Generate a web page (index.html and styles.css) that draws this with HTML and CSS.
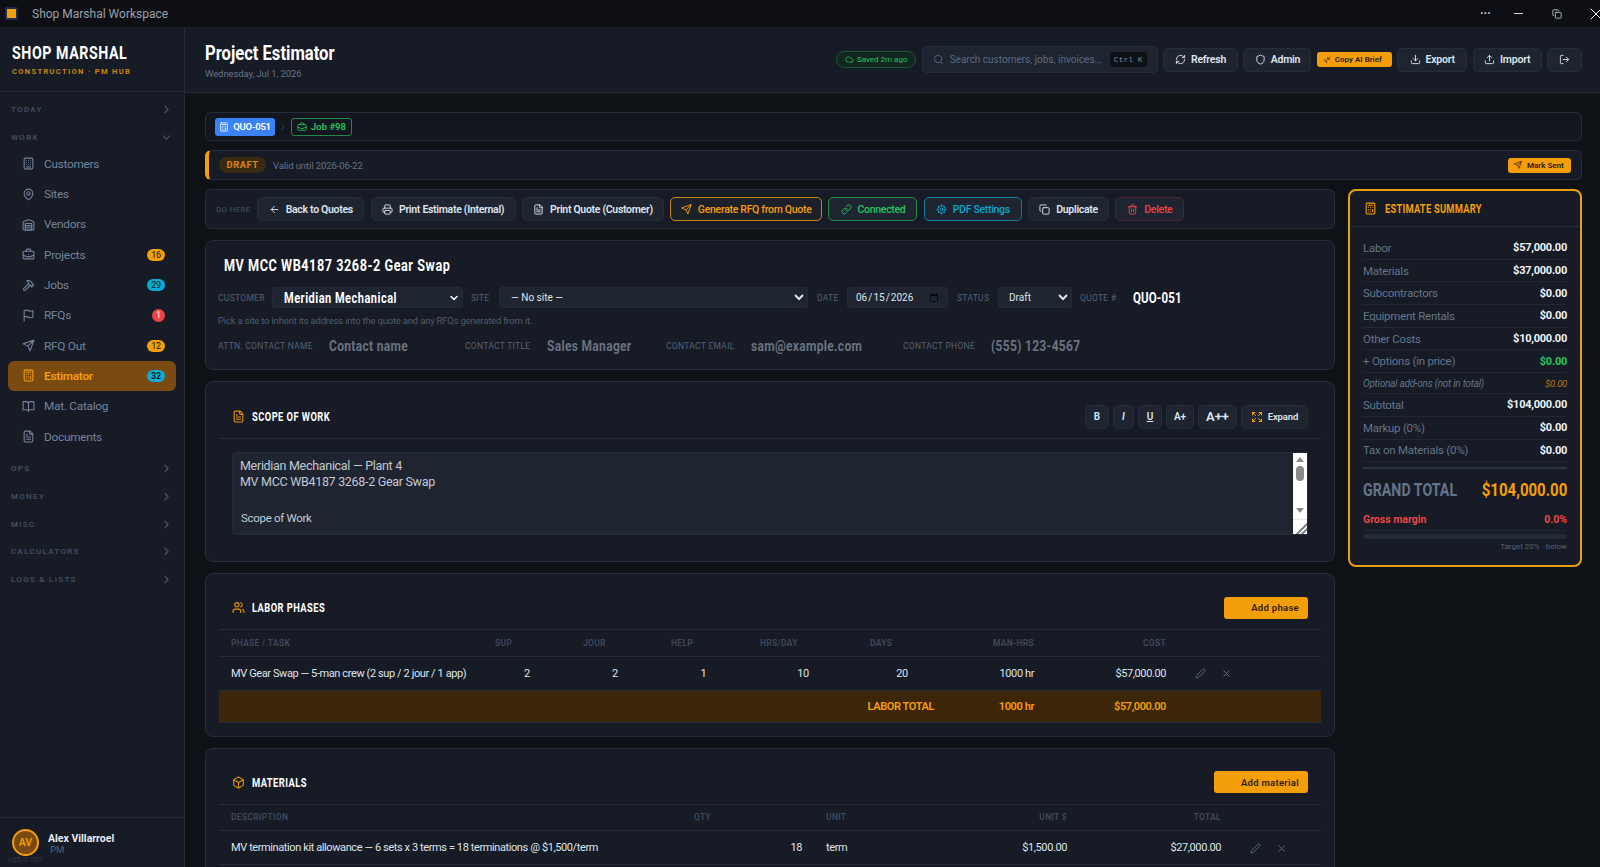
FILE: index.html
```html
<!DOCTYPE html>
<html lang="en">
<head>
    <meta charset="UTF-8">
    <title>Shop Marshal Workspace</title>
    <link rel="stylesheet" href="styles.css">
</head>
<body>
    <svg class="sprite" xmlns="http://www.w3.org/2000/svg">
        <symbol id="i-building" viewBox="0 0 24 24"><rect x="4" y="2" width="16" height="20" rx="2"/><path d="M9 22v-4h6v4M8 6h.01M16 6h.01M12 6h.01M12 10h.01M12 14h.01M16 10h.01M16 14h.01M8 10h.01M8 14h.01"/></symbol>
        <symbol id="i-pin" viewBox="0 0 24 24"><path d="M20 10c0 6-8 12-8 12s-8-6-8-12a8 8 0 0 1 16 0Z"/><circle cx="12" cy="10" r="3"/></symbol>
        <symbol id="i-warehouse" viewBox="0 0 24 24"><path d="M22 8.35V20a2 2 0 0 1-2 2H4a2 2 0 0 1-2-2V8.35A2 2 0 0 1 3.26 6.5l8-3.2a2 2 0 0 1 1.48 0l8 3.2A2 2 0 0 1 22 8.35Z"/><path d="M6 18h12M6 14h12"/><rect x="6" y="10" width="12" height="12"/></symbol>
        <symbol id="i-briefcase" viewBox="0 0 24 24"><path d="M12 12h.01M16 6V4a2 2 0 0 0-2-2h-4a2 2 0 0 0-2 2v2M22 13a18.15 18.15 0 0 1-20 0"/><rect x="2" y="6" width="20" height="14" rx="2"/></symbol>
        <symbol id="i-hammer" viewBox="0 0 24 24"><path d="m15 12-8.5 8.5c-.83.83-2.17.83-3 0a2.12 2.12 0 0 1 0-3L12 9M17.64 15 22 10.64M20.91 11.7l-1.25-1.25c-.6-.6-.93-1.4-.93-2.25v-.86L16.01 4.6a5.56 5.56 0 0 0-3.94-1.64H9l.92.82A6.18 6.18 0 0 1 12 8.4v1.56l2 2h2.47l2.26 1.91"/></symbol>
        <symbol id="i-flag" viewBox="0 0 24 24"><path d="M4 15s1-1 4-1 5 2 8 2 4-1 4-1V3s-1 1-4 1-5-2-8-2-4 1-4 1zM4 22v-7"/></symbol>
        <symbol id="i-send" viewBox="0 0 24 24"><path d="m22 2-7 20-4-9-9-4ZM22 2 11 13"/></symbol>
        <symbol id="i-calc" viewBox="0 0 24 24"><rect x="4" y="2" width="16" height="20" rx="2"/><path d="M8 6h8M16 14v4M16 10h.01M12 10h.01M8 10h.01M12 14h.01M8 14h.01M12 18h.01M8 18h.01"/></symbol>
        <symbol id="i-book" viewBox="0 0 24 24"><path d="M2 3h6a4 4 0 0 1 4 4v14a3 3 0 0 0-3-3H2zM22 3h-6a4 4 0 0 0-4 4v14a3 3 0 0 1 3-3h7z"/></symbol>
        <symbol id="i-file" viewBox="0 0 24 24"><path d="M15 2H6a2 2 0 0 0-2 2v16a2 2 0 0 0 2 2h12a2 2 0 0 0 2-2V7ZM14 2v4a2 2 0 0 0 2 2h4M10 9H8M16 13H8M16 17H8"/></symbol>
        <symbol id="i-right" viewBox="0 0 24 24"><path d="m9 18 6-6-6-6"/></symbol>
        <symbol id="i-down" viewBox="0 0 24 24"><path d="m6 9 6 6 6-6"/></symbol>
        <symbol id="i-cloud" viewBox="0 0 24 24"><path d="M17.5 19H9a7 7 0 1 1 6.71-9h1.79a4.5 4.5 0 1 1 0 9Z"/></symbol>
        <symbol id="i-search" viewBox="0 0 24 24"><circle cx="11" cy="11" r="8"/><path d="m21 21-4.3-4.3"/></symbol>
        <symbol id="i-refresh" viewBox="0 0 24 24"><path d="M3 12a9 9 0 0 1 9-9 9.75 9.75 0 0 1 6.74 2.74L21 8M21 3v5h-5M21 12a9 9 0 0 1-9 9 9.75 9.75 0 0 1-6.74-2.74L3 16M8 16H3v5"/></symbol>
        <symbol id="i-shield" viewBox="0 0 24 24"><path d="M20 13c0 5-3.5 7.5-7.66 8.95a1 1 0 0 1-.67-.01C7.5 20.5 4 18 4 13V6a1 1 0 0 1 1-1c2 0 4.5-1.2 6.24-2.72a1.17 1.17 0 0 1 1.52 0C14.51 3.81 17 5 19 5a1 1 0 0 1 1 1z"/></symbol>
        <symbol id="i-spark" viewBox="0 0 24 24"><path d="M14 4v6h6M14 10l7-7M4 12h4M6 17l3-3M11 16v4"/></symbol>
        <symbol id="i-download" viewBox="0 0 24 24"><path d="M21 15v4a2 2 0 0 1-2 2H5a2 2 0 0 1-2-2v-4M7 10l5 5 5-5M12 15V3"/></symbol>
        <symbol id="i-upload" viewBox="0 0 24 24"><path d="M21 15v4a2 2 0 0 1-2 2H5a2 2 0 0 1-2-2v-4M17 8l-5-5-5 5M12 3v12"/></symbol>
        <symbol id="i-logout" viewBox="0 0 24 24"><path d="M9 21H5a2 2 0 0 1-2-2V5a2 2 0 0 1 2-2h4M16 17l5-5-5-5M21 12H9"/></symbol>
        <symbol id="i-left" viewBox="0 0 24 24"><path d="m12 19-7-7 7-7M19 12H5"/></symbol>
        <symbol id="i-printer" viewBox="0 0 24 24"><path d="M6 18H4a2 2 0 0 1-2-2v-5a2 2 0 0 1 2-2h16a2 2 0 0 1 2 2v5a2 2 0 0 1-2 2h-2M6 9V3a1 1 0 0 1 1-1h10a1 1 0 0 1 1 1v6"/><rect x="6" y="14" width="12" height="8" rx="1"/></symbol>
        <symbol id="i-link" viewBox="0 0 24 24"><path d="M10 13a5 5 0 0 0 7.54.54l3-3a5 5 0 0 0-7.07-7.07l-1.72 1.71M14 11a5 5 0 0 0-7.54-.54l-3 3a5 5 0 0 0 7.07 7.07l1.71-1.71"/></symbol>
        <symbol id="i-gear" viewBox="0 0 24 24"><circle cx="12" cy="12" r="8"/><circle cx="12" cy="12" r="3"/><path d="M12 2v2M12 20v2M2 12h2M20 12h2M5 5l1.5 1.5M17.5 17.500 19 19M5 19l1.5-1.5M17.5 6.500 19 5"/></symbol>
        <symbol id="i-copy" viewBox="0 0 24 24"><rect x="8" y="8" width="14" height="14" rx="2"/><path d="M4 16c-1.100 0-2-.9-2-2V4c0-1.100.9-2 2-2h10c1.100 0 2 .9 2 2"/></symbol>
        <symbol id="i-trash" viewBox="0 0 24 24"><path d="M3 6h18M19 6v14c0 1-1 2-2 2H7c-1 0-2-1-2-2V6M8 6V4c0-1 1-2 2-2h4c1 0 2 1 2 2v2M10 11v6M14 11v6"/></symbol>
        <symbol id="i-users" viewBox="0 0 24 24"><path d="M16 21v-2a4 4 0 0 0-4-4H6a4 4 0 0 0-4 4v2"/><circle cx="9" cy="7" r="4"/><path d="M22 21v-2a4 4 0 0 0-3-3.870M16 3.130a4 4 0 0 1 0 7.750"/></symbol>
        <symbol id="i-box" viewBox="0 0 24 24"><path d="M21 8a2 2 0 0 0-1-1.730l-7-4a2 2 0 0 0-2 0l-7 4A2 2 0 0 0 3 8v8a2 2 0 0 0 1 1.730l7 4a2 2 0 0 0 2 0l7-4A2 2 0 0 0 21 16ZM3.300 7 12 12l8.700-5M12 22V12"/></symbol>
        <symbol id="i-pencil" viewBox="0 0 24 24"><path d="M21.170 6.810a1 1 0 0 0-3.990-3.990L3.840 16.170a2 2 0 0 0-.5.830l-1.320 4.350a.5.5 0 0 0 .62.62l4.350-1.320a2 2 0 0 0 .83-.5z"/></symbol>
        <symbol id="i-x" viewBox="0 0 24 24"><path d="M18 6 6 18M6 6l12 12"/></symbol>
        <symbol id="i-expand" viewBox="0 0 24 24"><path d="m21 21-6-6m6 6v-4.800m0 4.800h-4.800M3 16.200V21m0 0h4.800M3 21l6-6M21 7.800V3m0 0h-4.800M21 3l-6 6M3 7.800V3m0 0h4.800M3 3l6 6"/></symbol>
    </svg>

    <div class="titlebar">
        <span class="app-icon"></span>
        <span class="app-name">Shop Marshal Workspace</span>
        <div class="win-controls">
            <span class="win-dots">&middot;&middot;&middot;</span>
            <span class="win-min"></span>
            <svg class="icon win-restore"><use href="#i-copy"/></svg>
            <svg class="icon win-close"><use href="#i-x"/></svg>
        </div>
    </div>

    <div class="app">
        <aside class="sidebar">
            <div class="brand">
                <div class="brand-name"><span class="narrow">SHOP MARSHAL</span></div>
                <div class="brand-sub">CONSTRUCTION &middot; PM HUB</div>
            </div>
            <nav class="nav">
                <div class="nav-section">TODAY <svg class="icon"><use href="#i-right"/></svg></div>
                <div class="nav-section open">WORK <svg class="icon"><use href="#i-down"/></svg></div>
                <a class="nav-item"><svg class="icon"><use href="#i-building"/></svg>Customers</a>
                <a class="nav-item"><svg class="icon"><use href="#i-pin"/></svg>Sites</a>
                <a class="nav-item"><svg class="icon"><use href="#i-warehouse"/></svg>Vendors</a>
                <a class="nav-item"><svg class="icon"><use href="#i-briefcase"/></svg>Projects<span class="badge badge-orange">16</span></a>
                <a class="nav-item"><svg class="icon"><use href="#i-hammer"/></svg>Jobs<span class="badge badge-cyan">29</span></a>
                <a class="nav-item"><svg class="icon"><use href="#i-flag"/></svg>RFQs<span class="badge badge-red">1</span></a>
                <a class="nav-item"><svg class="icon"><use href="#i-send"/></svg>RFQ Out<span class="badge badge-orange">12</span></a>
                <a class="nav-item active"><svg class="icon"><use href="#i-calc"/></svg>Estimator<span class="badge badge-cyan">32</span></a>
                <a class="nav-item"><svg class="icon"><use href="#i-book"/></svg>Mat. Catalog</a>
                <a class="nav-item"><svg class="icon"><use href="#i-file"/></svg>Documents</a>
                <div class="nav-section after-items">OPS <svg class="icon"><use href="#i-right"/></svg></div>
                <div class="nav-section">MONEY <svg class="icon"><use href="#i-right"/></svg></div>
                <div class="nav-section">MISC <svg class="icon"><use href="#i-right"/></svg></div>
                <div class="nav-section">CALCULATORS <svg class="icon"><use href="#i-right"/></svg></div>
                <div class="nav-section">LOGS &amp; LISTS <svg class="icon"><use href="#i-right"/></svg></div>
            </nav>
            <div class="user">
                <div class="avatar">AV</div>
                <div>
                    <div class="user-name">Alex Villarroel</div>
                    <div class="user-role">PM</div>
                </div>
                <div class="version">v25.0.107</div>
            </div>
        </aside>

        <main class="main">
            <header class="topbar">
                <div class="page-title">
                    <h1><span class="narrow">Project Estimator</span></h1>
                    <p>Wednesday, Jul 1, 2026</p>
                </div>
                <div class="top-actions">
                    <span class="saved"><svg class="icon"><use href="#i-cloud"/></svg>Saved 2m ago</span>
                    <div class="search">
                        <svg class="icon"><use href="#i-search"/></svg>
                        <span>Search customers, jobs, invoices...</span>
                        <kbd>Ctrl K</kbd>
                    </div>
                    <button class="btn top-btn"><svg class="icon"><use href="#i-refresh"/></svg>Refresh</button>
                    <button class="btn top-btn"><svg class="icon"><use href="#i-shield"/></svg>Admin</button>
                    <button class="btn-primary brief"><svg class="icon"><use href="#i-spark"/></svg>Copy AI Brief</button>
                    <button class="btn top-btn"><svg class="icon"><use href="#i-download"/></svg>Export</button>
                    <button class="btn top-btn"><svg class="icon"><use href="#i-upload"/></svg>Import</button>
                    <button class="btn top-btn logout"><svg class="icon"><use href="#i-logout"/></svg></button>
                </div>
            </header>

            <div class="content">
                <div class="strip chain">
                    <span class="chip chip-blue"><svg class="icon"><use href="#i-calc"/></svg>QUO-051</span>
                    <svg class="icon chain-sep"><use href="#i-right"/></svg>
                    <span class="chip chip-green"><svg class="icon"><use href="#i-briefcase"/></svg>Job #98</span>
                </div>
                <div class="strip status-bar">
                    <span class="draft">DRAFT</span>
                    <span class="valid">Valid until 2026-06-22</span>
                    <button class="btn-primary mark-sent"><svg class="icon"><use href="#i-send"/></svg>Mark Sent</button>
                </div>

                <div class="layout">
                    <div class="left-col">
                        <div class="strip actions">
                            <span class="do-here">DO HERE</span>
                            <button class="btn act-btn"><svg class="icon"><use href="#i-left"/></svg>Back to Quotes</button>
                            <button class="btn act-btn"><svg class="icon"><use href="#i-printer"/></svg>Print Estimate (Internal)</button>
                            <button class="btn act-btn"><svg class="icon"><use href="#i-file"/></svg>Print Quote (Customer)</button>
                            <button class="btn act-btn line-orange"><svg class="icon"><use href="#i-send"/></svg>Generate RFQ from Quote</button>
                            <button class="btn act-btn line-green"><svg class="icon"><use href="#i-link"/></svg>Connected</button>
                            <button class="btn act-btn line-cyan"><svg class="icon"><use href="#i-gear"/></svg>PDF Settings</button>
                            <button class="btn act-btn"><svg class="icon"><use href="#i-copy"/></svg>Duplicate</button>
                            <button class="btn act-btn line-red"><svg class="icon"><use href="#i-trash"/></svg>Delete</button>
                        </div>

                        <section class="card info-card">
                            <h2 class="quote-title"><span class="narrow">MV MCC WB4187 3268-2 Gear Swap</span></h2>
                            <div class="field-row">
                                <label class="lbl">CUSTOMER</label>
                                <div class="field select-customer"><span class="narrow">Meridian Mechanical</span><svg class="icon"><use href="#i-down"/></svg></div>
                                <label class="lbl">SITE</label>
                                <select class="field select-site"><option>&mdash; No site &mdash;</option></select>
                                <label class="lbl">DATE</label>
                                <input class="field input-date" type="date" value="2026-06-15">
                                <label class="lbl">STATUS</label>
                                <select class="field select-status"><option>Draft</option></select>
                                <label class="lbl">QUOTE #</label>
                                <span class="quote-no"><span class="narrow">QUO-051</span></span>
                            </div>
                            <p class="hint">Pick a site to inherit its address into the quote and any RFQs generated from it.</p>
                            <div class="contact-row">
                                <label class="lbl">ATTN: CONTACT NAME</label><span class="contact-val"><span class="narrow">Contact name</span></span>
                                <label class="lbl">CONTACT TITLE</label><span class="contact-val"><span class="narrow">Sales Manager</span></span>
                                <label class="lbl">CONTACT EMAIL</label><span class="contact-val"><span class="narrow">sam@example.com</span></span>
                                <label class="lbl">CONTACT PHONE</label><span class="contact-val"><span class="narrow">(555) 123-4567</span></span>
                            </div>
                        </section>

                        <section class="card">
                            <div class="card-head">
                                <h3><svg class="icon"><use href="#i-file"/></svg><span class="narrow">SCOPE OF WORK</span></h3>
                                <div class="toolbar">
                                    <button class="btn tool tool-b">B</button>
                                    <button class="btn tool tool-i">I</button>
                                    <button class="btn tool tool-u">U</button>
                                    <button class="btn tool tool-a">A+</button>
                                    <button class="btn tool tool-aa">A++</button>
                                    <button class="btn tool tool-expand"><svg class="icon"><use href="#i-expand"/></svg>Expand</button>
                                </div>
                            </div>
                            <div class="editor">
                                <div class="editor-text">
                                    <div>Meridian Mechanical &mdash; Plant 4</div>
                                    <div>MV MCC WB4187 3268-2 Gear Swap</div>
                                    <div class="editor-gap"></div>
                                    <div class="editor-small">Scope of Work</div>
                                </div>
                                <div class="fake-scroll">
                                    <span class="arrow-up"></span>
                                    <span class="thumb"></span>
                                    <span class="arrow-down"></span>
                                    <span class="grip"></span>
                                </div>
                            </div>
                        </section>

                        <section class="card table-card">
                            <div class="card-head">
                                <h3><svg class="icon"><use href="#i-users"/></svg><span class="narrow">LABOR PHASES</span></h3>
                                <button class="btn-primary add-btn add-phase">Add phase</button>
                            </div>
                            <table class="tbl labor">
                                <thead>
                                    <tr><th>PHASE / TASK</th><th>SUP</th><th>JOUR</th><th>HELP</th><th>HRS/DAY</th><th>DAYS</th><th class="num">MAN-HRS</th><th class="num">COST</th><th></th></tr>
                                </thead>
                                <tbody>
                                    <tr>
                                        <td>MV Gear Swap &mdash; 5-man crew (2 sup / 2 jour / 1 app)</td><td class="mid">2</td><td class="mid">2</td><td class="mid">1</td><td class="mid">10</td><td class="mid">20</td><td class="num">1000 hr</td><td class="num">$57,000.00</td>
                                        <td class="row-tools"><svg class="icon"><use href="#i-pencil"/></svg><svg class="icon"><use href="#i-x"/></svg></td>
                                    </tr>
                                    <tr class="total-row">
                                        <td colspan="6" class="num">LABOR TOTAL</td><td class="num">1000 hr</td><td class="num">$57,000.00</td><td></td>
                                    </tr>
                                </tbody>
                            </table>
                        </section>

                        <section class="card table-card">
                            <div class="card-head">
                                <h3><svg class="icon"><use href="#i-box"/></svg><span class="narrow">MATERIALS</span></h3>
                                <button class="btn-primary add-btn add-material">Add material</button>
                            </div>
                            <table class="tbl materials">
                                <thead>
                                    <tr><th>DESCRIPTION</th><th>QTY</th><th>UNIT</th><th class="num">UNIT $</th><th class="num">TOTAL</th><th></th></tr>
                                </thead>
                                <tbody>
                                    <tr>
                                        <td>MV termination kit allowance &mdash; 6 sets x 3 terms = 18 terminations @ $1,500/term</td><td class="num">18</td><td>term</td><td class="num">$1,500.00</td><td class="num">$27,000.00</td>
                                        <td class="row-tools"><svg class="icon"><use href="#i-pencil"/></svg><svg class="icon"><use href="#i-x"/></svg></td>
                                    </tr>
                                </tbody>
                            </table>
                        </section>
                    </div>

                    <aside class="summary">
                        <div class="summary-head"><svg class="icon"><use href="#i-calc"/></svg><span class="narrow">ESTIMATE SUMMARY</span></div>
                        <div class="summary-body">
                            <div class="sum-row"><span>Labor</span><b>$57,000.00</b></div>
                            <div class="sum-row"><span>Materials</span><b>$37,000.00</b></div>
                            <div class="sum-row"><span>Subcontractors</span><b>$0.00</b></div>
                            <div class="sum-row"><span>Equipment Rentals</span><b>$0.00</b></div>
                            <div class="sum-row"><span>Other Costs</span><b>$10,000.00</b></div>
                            <div class="sum-row"><span>+ Options (in price)</span><b class="green">$0.00</b></div>
                            <div class="sum-row optional"><span>Optional add-ons (not in total)</span><b>$0.00</b></div>
                            <div class="sum-row"><span>Subtotal</span><b>$104,000.00</b></div>
                            <div class="sum-row"><span>Markup (0%)</span><b>$0.00</b></div>
                            <div class="sum-row"><span>Tax on Materials (0%)</span><b>$0.00</b></div>
                            <div class="grand"><span class="narrow">GRAND TOTAL</span><b class="narrow">$104,000.00</b></div>
                            <div class="margin"><span>Gross margin</span><span>0.0%</span></div>
                            <div class="margin-bar"></div>
                            <div class="target">Target 20% &middot; below</div>
                        </div>
                    </aside>
                </div>
            </div>
        </main>
    </div>
</body>
</html>
```

FILE: styles.css
```css
/* reset */
* {
    margin: 0;
    padding: 0;
    box-sizing: border-box;
}

:root {
    --bg: #0e1116;
    --panel: #161b25;
    --raised: #1e2430;
    --line: #262d3a;
    --orange: #f59e0b;
    --muted: #64748b;
    --text: #e2e8f0;
}

body {
    font-family: Roboto, "Liberation Sans", sans-serif;
    background: var(--bg);
    color: var(--text);
    height: 100vh;
    overflow: hidden;
    display: flex;
    flex-direction: column;
    font-size: 12px;
}

.sprite {
    display: none;
}

.icon {
    width: 14px;
    height: 14px;
    fill: none;
    stroke: currentColor;
    stroke-width: 2;
    stroke-linecap: round;
    stroke-linejoin: round;
    flex-shrink: 0;
}

/* no condensed face is installed, so headings are squeezed */
.narrow {
    display: inline-block;
    white-space: nowrap;
    font-weight: 700;
    transform: scaleX(0.79);
    transform-origin: left center;
}

button {
    font-family: inherit;
    cursor: pointer;
}

/* window title bar */
.titlebar {
    height: 27px;
    flex-shrink: 0;
    background: #0d0f14;
    display: flex;
    align-items: center;
    padding-left: 5px;
}

.app-icon {
    width: 13px;
    height: 13px;
    background: var(--orange);
    border: 2px solid #1b2c52;
    border-radius: 2px;
}

.app-name {
    margin-left: 14px;
    font-size: 12px;
    color: #9aa1ac;
}

.win-controls {
    margin-left: auto;
    display: flex;
    align-items: center;
    color: #c9ced6;
}

.win-dots {
    font-size: 12px;
    font-weight: 700;
    width: 10px;
}

.win-min {
    width: 9px;
    height: 1px;
    background: #d5d9df;
    margin-left: 24px;
}

.win-restore {
    width: 10px;
    height: 10px;
    margin-left: 29px;
}

.win-close {
    width: 20px;
    height: 20px;
    margin-left: 24px;
    margin-right: -6px;
    stroke-width: 1.2;
    color: #f1f3f5;
}

.app {
    flex: 1;
    min-height: 0;
    display: flex;
}

/* sidebar */
.sidebar {
    width: 185px;
    flex-shrink: 0;
    background: var(--panel);
    border-right: 1px solid var(--line);
    display: flex;
    flex-direction: column;
}

.brand {
    height: 65px;
    padding: 15px 12px 0;
    border-bottom: 1px solid var(--line);
}

.brand-name {
    font-size: 18px;
    line-height: 21px;
    letter-spacing: 0.7px;
    color: #fff;
}

.brand-sub {
    margin-top: 4px;
    font-size: 7.5px;
    font-weight: 700;
    letter-spacing: 1.35px;
    white-space: nowrap;
    color: #c9850f;
}

.nav {
    flex: 1;
    padding-top: 4px;
}

.nav-section {
    height: 27.6px;
    padding: 0 11px 0 11px;
    display: flex;
    align-items: center;
    justify-content: space-between;
    font-size: 8px;
    font-weight: 500;
    letter-spacing: 1.3px;
    color: #475266;
}

.nav-section .icon {
    width: 13px;
    height: 13px;
    color: #4b5668;
}

.nav-section.open {
    margin-bottom: -2px;
}

.nav-section.after-items {
    margin-top: 4px;
}

.nav-item {
    height: 29.3px;
    margin: 0 8px 1px;
    padding: 0 11px 0 14px;
    display: flex;
    align-items: center;
    gap: 9px;
    border-radius: 6px;
    font-size: 11.8px;
    letter-spacing: -0.25px;
    color: #75839a;
}

.nav-item .icon {
    width: 13px;
    height: 13px;
}

.nav-item.active {
    background: #7a4a10;
    color: var(--orange);
    font-weight: 600;
}

.badge {
    margin-left: auto;
    min-width: 18px;
    height: 12px;
    padding: 0 4px;
    border-radius: 7px;
    font-size: 9px;
    line-height: 12px;
    text-align: center;
    color: #10131a;
}

.badge-orange { background: var(--orange); }
.badge-cyan { background: #06aed4; }
.badge-red { background: #ef4444; color: #fff; min-width: 13px; height: 13px; }

.user {
    position: relative;
    height: 50px;
    border-top: 1px solid var(--line);
    padding: 11px 12px 0;
    display: flex;
    gap: 9px;
}

.avatar {
    width: 27px;
    height: 27px;
    border-radius: 50%;
    border: 2px solid var(--orange);
    background: #7a4a10;
    color: var(--orange);
    font-size: 10.5px;
    font-weight: 600;
    text-align: center;
    line-height: 23px;
}

.user-name {
    font-size: 10.5px;
    font-weight: 700;
    line-height: 13px;
    margin-top: 3px;
    color: #e6ebf2;
}

.user-role {
    font-size: 9.5px;
    line-height: 9px;
    margin-left: 2px;
    color: #566176;
}

.version {
    position: absolute;
    left: 8px;
    bottom: 3px;
    font-size: 8px;
    color: #2f3746;
}

/* top bar */
.main {
    flex: 1;
    min-width: 0;
    display: flex;
    flex-direction: column;
}

.topbar {
    height: 66px;
    flex-shrink: 0;
    background: var(--panel);
    border-bottom: 1px solid var(--line);
    padding: 0 18px 0 20px;
    display: flex;
    align-items: center;
    justify-content: space-between;
}

.page-title h1 {
    font-size: 21px;
    line-height: 26px;
    color: #fff;
}

.page-title p {
    font-size: 9.5px;
    margin-top: 2px;
    letter-spacing: -0.1px;
    color: #64748b;
}

.top-actions {
    display: flex;
    align-items: center;
    gap: 5.4px;
}

.saved {
    height: 17px;
    width: 80px;
    border: 1px solid #1c5a35;
    border-radius: 9px;
    background: #12261f;
    color: #22c55e;
    font-size: 8px;
    display: flex;
    align-items: center;
    justify-content: center;
    gap: 3px;
}

.saved .icon {
    width: 9px;
    height: 9px;
}

.search {
    width: 236px;
    height: 27px;
    padding: 0 10px;
    background: var(--raised);
    border: 1px solid var(--line);
    border-radius: 5px;
    display: flex;
    align-items: center;
    gap: 6px;
    font-size: 10px;
    color: #5c6a80;
}

.search .icon {
    width: 11px;
    height: 11px;
}

.search kbd {
    margin-left: auto;
    font-family: "Liberation Mono", monospace;
    font-size: 8px;
    padding: 3px 4px;
    background: #0e1116;
    border-radius: 3px;
    color: #7a8598;
}

.btn {
    display: inline-flex;
    align-items: center;
    justify-content: center;
    background: var(--raised);
    border: 1px solid var(--line);
    border-radius: 5px;
    font-weight: 600;
    color: #dfe5ee;
    white-space: nowrap;
}

.top-btn {
    height: 24px;
    gap: 5px;
    padding: 0 12px;
    font-size: 10.5px;
    letter-spacing: -0.2px;
}

.top-btn .icon {
    width: 11px;
    height: 11px;
}

.top-btn:nth-of-type(1) { width: 75px; }
.top-btn:nth-of-type(2) { width: 68px; }
.top-btn:nth-of-type(4) { width: 70px; }
.top-btn:nth-of-type(5) { width: 69px; }
.logout { width: 35px; padding: 0; }

.btn-primary {
    background: var(--orange);
    color: #2b1b03;
    border: 0;
    border-radius: 3px;
    font-weight: 600;
    display: inline-flex;
    align-items: center;
}

.brief {
    width: 75px;
    height: 15px;
    padding-left: 6px;
    gap: 4px;
    font-size: 8px;
}

.brief .icon {
    width: 8px;
    height: 8px;
}

/* main column */
.content {
    flex: 1;
    min-height: 0;
    overflow: hidden;
    padding: 19px 18px 0 20px;
    display: flex;
    flex-direction: column;
    gap: 9px;
}

.strip {
    background: var(--panel);
    border: 1px solid var(--line);
    border-radius: 6px;
    display: flex;
    align-items: center;
}

.chain {
    height: 29px;
    flex-shrink: 0;
    padding-left: 9px;
    gap: 3px;
    background: #12161e;
}

.chip {
    height: 18px;
    display: inline-flex;
    align-items: center;
    justify-content: center;
    gap: 4px;
    border-radius: 3px;
    font-size: 9.5px;
    font-weight: 600;
}

.chip .icon {
    width: 10px;
    height: 10px;
}

.chip-blue {
    width: 60px;
    background: #3b82f6;
    color: #fff;
    letter-spacing: -0.2px;
}

.chip-green {
    width: 61px;
    border: 1px solid #1f8a48;
    color: #22c55e;
}

.chain-sep {
    width: 10px;
    height: 10px;
    color: #3f4a5b;
}

.status-bar {
    height: 30px;
    flex-shrink: 0;
    padding: 0 10px 0 10px;
    border-left: 4px solid var(--orange);
    gap: 7px;
}

.draft {
    width: 47px;
    height: 16px;
    border-radius: 8px;
    background: #3a2a12;
    color: #e0850e;
    font-size: 9.5px;
    font-weight: 700;
    line-height: 16px;
    text-align: center;
    letter-spacing: 0.4px;
}

.valid {
    font-size: 9.5px;
    letter-spacing: -0.1px;
    color: #64748b;
}

.mark-sent {
    margin-left: auto;
    width: 63px;
    height: 15px;
    padding-left: 6px;
    gap: 5px;
    font-size: 8px;
}

.mark-sent .icon {
    width: 8px;
    height: 8px;
}

.layout {
    display: grid;
    grid-template-columns: 1130px 234px;
    gap: 13px;
    align-items: start;
}

.left-col {
    display: flex;
    flex-direction: column;
    gap: 11px;
}

.actions {
    height: 40px;
    padding: 0 10px;
    gap: 6.3px;
}

.do-here {
    width: 35px;
    font-size: 8px;
    letter-spacing: 0.3px;
    white-space: nowrap;
    color: #475266;
}

.act-btn {
    height: 24px;
    gap: 6px;
    font-size: 10.5px;
    letter-spacing: -0.3px;
}

.act-btn .icon {
    width: 11px;
    height: 11px;
}

.act-btn:nth-of-type(1) { width: 107px; }
.act-btn:nth-of-type(2) { width: 145px; }
.act-btn:nth-of-type(3) { width: 142px; }
.act-btn:nth-of-type(4) { width: 152px; }
.act-btn:nth-of-type(5) { width: 89px; }
.act-btn:nth-of-type(6) { width: 98px; }
.act-btn:nth-of-type(7) { width: 81px; }
.act-btn:nth-of-type(8) { width: 69px; }

.line-orange { border-color: #c9850f; color: var(--orange); background: #1c2029; font-weight: 500; }
.line-green { border-color: #1f8a48; color: #22c55e; font-weight: 500; }
.line-cyan { border-color: #0e7f9f; color: #0ea5d0; font-weight: 500; }
.line-red { border-color: #4a2730; color: #ef4444; font-weight: 500; }

/* cards */
.card {
    background: var(--panel);
    border: 1px solid var(--line);
    border-radius: 8px;
    padding: 12px 13px;
}

.info-card {
    height: 130px;
    padding: 16px 12px 0;
}

.quote-title {
    font-size: 16px;
    line-height: 18px;
    letter-spacing: 0.7px;
    color: #fff;
    padding-left: 6px;
}

.lbl {
    font-size: 8.5px;
    letter-spacing: 0.3px;
    color: #566176;
    white-space: nowrap;
}

.field {
    height: 21px;
    background: var(--raised);
    border: 1px solid #222937;
    border-radius: 3px;
    color: #dfe5ee;
    font-family: inherit;
    font-size: 10px;
    padding-left: 7px;
    color-scheme: dark;
}

.field-row {
    display: grid;
    grid-template-columns: 54px 199px 28px 318px 30px 110px 41px 82px 53px auto;
    align-items: center;
    margin-top: 12px;
}

.select-customer {
    width: 191px;
    padding: 0 2px 0 11px;
    display: flex;
    align-items: center;
    justify-content: space-between;
    font-size: 14px;
    letter-spacing: 0.6px;
    color: #fff;
}

.select-customer .icon {
    width: 12px;
    height: 12px;
    stroke-width: 3;
}

.select-site { width: 309px; }
.input-date { width: 101px; padding-right: 6px; color-scheme: light; }
.select-status { width: 74px; padding-left: 6px; }

.quote-no {
    font-size: 15.5px;
    letter-spacing: 0.2px;
    color: #fff;
}

.quote-no .narrow {
    transform: scaleX(0.74);
}

.hint {
    margin-top: 7px;
    font-size: 9.5px;
    letter-spacing: -0.2px;
    color: #4f5b6e;
}

.contact-row {
    display: grid;
    grid-template-columns: 111px 136px 82px 119px 85px 152px 88px auto;
    align-items: center;
    margin-top: 11px;
}

.contact-val {
    font-size: 15px;
    letter-spacing: 0.4px;
    color: #6b7280;
}

.contact-val .narrow {
    transform: scaleX(0.8);
}

.card-head {
    display: flex;
    align-items: center;
    justify-content: space-between;
    height: 45px;
    margin: 0 0 13px;
    padding: 11px 0 0;
    border-bottom: 1px solid var(--line);
}

.card-head h3 {
    font-size: 13px;
    letter-spacing: 0.6px;
    color: #fff;
    display: flex;
    align-items: center;
    gap: 7px;
    padding: 0 0 11px 13px;
}

.card-head h3 .narrow {
    transform: scaleX(0.72);
}

.card-head h3 .icon {
    width: 13px;
    height: 13px;
    color: #e8920b;
}

.toolbar {
    display: flex;
    gap: 4px;
    padding: 0 13px 10px 0;
}

.tool {
    height: 24px;
    font-size: 10px;
}

.tool-b { width: 24px; }
.tool-i { width: 21px; font-style: italic; }
.tool-u { width: 24px; text-decoration: underline; }
.tool-a { width: 28px; }
.tool-aa { width: 39px; font-size: 13px; }
.tool-expand { width: 67px; gap: 5px; font-size: 9.5px; letter-spacing: -0.1px; }
.tool-expand .icon { width: 12px; height: 12px; color: var(--orange); }

.editor {
    height: 83px;
    margin: 0 13px 14px;
    display: flex;
    background: var(--raised);
    border: 1px solid #232a38;
    border-radius: 4px 0 0 4px;
}

.editor-text {
    flex: 1;
    padding: 5px 7px;
    font-size: 12.5px;
    letter-spacing: -0.3px;
    line-height: 16px;
    color: #c3cad5;
    overflow: hidden;
}

.editor-gap {
    height: 16px;
}

.editor-small {
    margin: 4px 0 0 1px;
    font-size: 11.5px;
}

.fake-scroll {
    width: 14px;
    background: #fff;
    display: flex;
    flex-direction: column;
    align-items: center;
    padding-top: 4px;
}

.arrow-up {
    border: 4px solid transparent;
    border-top: 0;
    border-bottom: 5px solid #8a8a8a;
}

.arrow-down {
    border: 4px solid transparent;
    border-bottom: 0;
    border-top: 5px solid #8a8a8a;
    margin-top: 27px;
}

.thumb {
    width: 8px;
    height: 15px;
    margin-top: 4px;
    border-radius: 4px;
    background: #8a8a8a;
}

.grip {
    width: 100%;
    flex: 1;
    margin-top: 6px;
    border-top: 1px solid #e5e5e5;
    background: linear-gradient(135deg, transparent 60%, #888 60%, #888 68%, transparent 68%, transparent 78%, #888 78%, #888 86%, transparent 86%);
}

.table-card {
    padding-bottom: 13px;
}

.table-card .card-head {
    height: 44px;
    margin-bottom: 0;
}

.add-btn {
    height: 22px;
    justify-content: flex-end;
    padding-right: 9px;
    margin: 0 13px 11px 0;
    font-size: 9.5px;
    letter-spacing: 0.3px;
}

.add-phase { width: 84px; }
.add-material { width: 94px; }

/* tables */
.tbl {
    width: 1102px;
    table-layout: fixed;
    border-collapse: collapse;
}

.tbl th {
    height: 26px;
    padding: 0 12px;
    text-align: left;
    font-size: 8.5px;
    font-weight: 600;
    letter-spacing: 0.3px;
    color: #3f4a5c;
    border-bottom: 1px solid var(--line);
}

.tbl td {
    height: 34px;
    padding: 0 12px;
    font-size: 11px;
    letter-spacing: -0.4px;
    color: #dfe5ee;
    white-space: nowrap;
    border-bottom: 1px solid var(--line);
}

.tbl .num { text-align: right; }
.tbl .mid { text-align: center; }

.labor th:nth-child(1) { width: 264px; }
.labor th:nth-child(2),
.labor th:nth-child(3) { width: 88px; }
.labor th:nth-child(4) { width: 89px; }
.labor th:nth-child(5) { width: 110px; }
.labor th:nth-child(6) { width: 88px; }
.labor th:nth-child(7) { width: 100px; }
.labor th:nth-child(8) { width: 132px; }

.tbl .total-row td {
    height: 32px;
    background: #3d2607;
    color: var(--orange);
    font-weight: 600;
}

.materials th:nth-child(1) { width: 463px; }
.materials th:nth-child(2) { width: 132px; }
.materials th:nth-child(3) { width: 110px; }
.materials th:nth-child(4) { width: 155px; }
.materials th:nth-child(5) { width: 154px; }

.row-tools .icon {
    width: 11px;
    height: 11px;
    color: #5f6d82;
    margin-right: 15px;
    vertical-align: middle;
}

.row-tools .icon:first-child {
    margin-left: 5px;
}

/* summary panel */
.summary {
    background: var(--panel);
    border: 2px solid #e8a013;
    border-radius: 8px;
    height: 378px;
}

.summary-head {
    height: 36px;
    padding-left: 14px;
    display: flex;
    align-items: center;
    gap: 8px;
    border-bottom: 1px solid var(--line);
    font-size: 13px;
    letter-spacing: 0.3px;
    color: var(--orange);
}

.summary-head .narrow {
    transform: scaleX(0.72);
}

.summary-head .icon {
    width: 13px;
    height: 13px;
}

.summary-body {
    padding: 10px 13px 0;
}

.sum-row {
    height: 22.7px;
    display: flex;
    align-items: center;
    justify-content: space-between;
    border-bottom: 1px solid #212835;
    font-size: 11.5px;
    letter-spacing: -0.25px;
    color: #64748b;
}

.sum-row b {
    font-size: 11px;
    font-weight: 700;
    color: #f1f5f9;
}

.sum-row b.green {
    color: #22c55e;
}

.optional {
    height: 21px;
    font-size: 10px;
    font-style: italic;
}

.optional b {
    font-size: 9.5px;
    font-weight: 400;
    color: #b97a10;
}

.grand {
    margin-top: 5px;
    height: 42px;
    border-top: 2px solid #2b3341;
    display: flex;
    align-items: center;
    justify-content: space-between;
    font-size: 18px;
    color: #64748b;
}

.grand span {
    margin-right: -30px;
}

.grand b {
    font-size: 19px;
    margin-left: -30px;
    transform-origin: right center;
    color: var(--orange);
}

.margin {
    height: 22px;
    display: flex;
    align-items: center;
    justify-content: space-between;
    border-bottom: 1px solid #212835;
    font-size: 10.5px;
    font-weight: 700;
    color: #ef4444;
}

.margin-bar {
    margin-top: 3px;
    height: 5px;
    border-radius: 3px;
    background: #232a37;
}

.target {
    margin-top: 3px;
    text-align: right;
    font-size: 8px;
    color: #566176;
}
```
